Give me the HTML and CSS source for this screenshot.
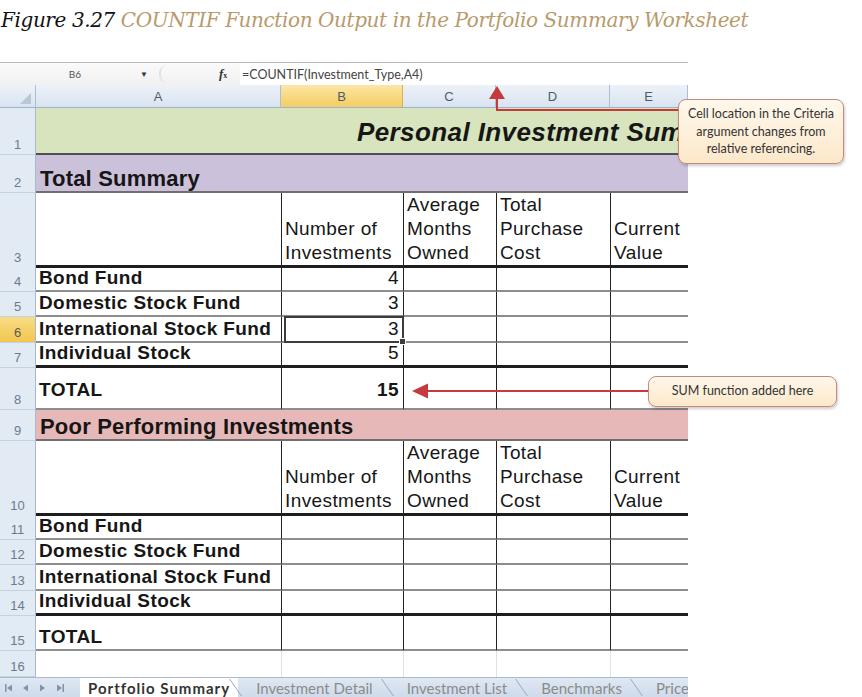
FILE: index.html
```html
<!DOCTYPE html>
<html lang="en">
<head>
  <meta charset="UTF-8">
  <meta name="viewport" content="width=device-width, initial-scale=1.0">
  <title>Figure 3.27 COUNTIF Function Output</title>
  <link rel="stylesheet" href="styles.css">
</head>
<body>
  <div class="page">
    <p class="caption"><span class="fig">Figure 3.27</span> COUNTIF Function Output in the Portfolio Summary Worksheet</p>

    <div class="excel">
      <div class="formula-bar">
        <div class="name-box">B6</div>
        <span class="drop">&#9660;</span>
        <span class="grip"></span>
        <span class="fx"><i>f</i><small>x</small></span>
        <div class="formula">=COUNTIF(Investment_Type,A4)</div>
      </div>

      <div class="sheet">
        <div class="row col-heads">
          <div class="corner"></div>
          <div class="ch">A</div>
          <div class="ch on">B</div>
          <div class="ch">C</div>
          <div class="ch">D</div>
          <div class="ch">E</div>
        </div>

        <div class="row title-row">
          <div class="rh">1</div>
          <div class="c wide title">Personal Investment Summary</div>
        </div>

        <div class="row section-row summary">
          <div class="rh">2</div>
          <div class="c wide section">Total Summary</div>
        </div>

        <div class="row head-row ruled">
          <div class="rh">3</div>
          <div class="c"></div>
          <div class="c"><span>Number of<br>Investments</span></div>
          <div class="c"><span>Average<br>Months<br>Owned</span></div>
          <div class="c"><span>Total<br>Purchase<br>Cost</span></div>
          <div class="c"><span>Current<br>Value</span></div>
        </div>

        <div class="row data-row ruled">
          <div class="rh">4</div>
          <div class="c label">Bond Fund</div>
          <div class="c num">4</div>
          <div class="c"></div><div class="c"></div><div class="c"></div>
        </div>
        <div class="row data-row ruled">
          <div class="rh">5</div>
          <div class="c label">Domestic Stock Fund</div>
          <div class="c num">3</div>
          <div class="c"></div><div class="c"></div><div class="c"></div>
        </div>
        <div class="row data-row ruled">
          <div class="rh on">6</div>
          <div class="c label">International Stock Fund</div>
          <div class="c num sel">3</div>
          <div class="c"></div><div class="c"></div><div class="c"></div>
        </div>
        <div class="row data-row last ruled">
          <div class="rh">7</div>
          <div class="c label">Individual Stock</div>
          <div class="c num">5</div>
          <div class="c"></div><div class="c"></div><div class="c"></div>
        </div>

        <div class="row total-row first-total ruled">
          <div class="rh">8</div>
          <div class="c label">TOTAL</div>
          <div class="c num bold">15</div>
          <div class="c"></div><div class="c"></div><div class="c"></div>
        </div>

        <div class="row section-row poor">
          <div class="rh">9</div>
          <div class="c wide section">Poor Performing Investments</div>
        </div>

        <div class="row head-row ruled">
          <div class="rh">10</div>
          <div class="c"></div>
          <div class="c"><span>Number of<br>Investments</span></div>
          <div class="c"><span>Average<br>Months<br>Owned</span></div>
          <div class="c"><span>Total<br>Purchase<br>Cost</span></div>
          <div class="c"><span>Current<br>Value</span></div>
        </div>

        <div class="row data-row ruled">
          <div class="rh">11</div>
          <div class="c label">Bond Fund</div>
          <div class="c"></div><div class="c"></div><div class="c"></div><div class="c"></div>
        </div>
        <div class="row data-row ruled">
          <div class="rh">12</div>
          <div class="c label">Domestic Stock Fund</div>
          <div class="c"></div><div class="c"></div><div class="c"></div><div class="c"></div>
        </div>
        <div class="row data-row ruled">
          <div class="rh">13</div>
          <div class="c label">International Stock Fund</div>
          <div class="c"></div><div class="c"></div><div class="c"></div><div class="c"></div>
        </div>
        <div class="row data-row last ruled">
          <div class="rh">14</div>
          <div class="c label">Individual Stock</div>
          <div class="c"></div><div class="c"></div><div class="c"></div><div class="c"></div>
        </div>

        <div class="row total-row ruled">
          <div class="rh">15</div>
          <div class="c label">TOTAL</div>
          <div class="c"></div><div class="c"></div><div class="c"></div><div class="c"></div>
        </div>

        <div class="row blank-row">
          <div class="rh">16</div>
          <div class="c"></div><div class="c"></div><div class="c"></div><div class="c"></div><div class="c"></div>
        </div>
      </div>

      <div class="tabs">
        <div class="tab-nav">
          <svg width="72" height="12" viewBox="0 0 72 12">
            <rect x="4" y="2" width="1.5" height="8" fill="#8093ab"/>
            <path d="M6 6 L11 2.5 V9.5 Z" fill="#8093ab"/>
            <path d="M22 6 L27 2.5 V9.5 Z" fill="#8093ab"/>
            <path d="M44 6 L39 2.5 V9.5 Z" fill="#8093ab"/>
            <path d="M61 6 L56 2.5 V9.5 Z" fill="#8093ab"/>
            <rect x="61.5" y="2" width="1.5" height="8" fill="#8093ab"/>
          </svg>
        </div>
        <div class="tab active">Portfolio Summary</div>
        <div class="tab">Investment Detail</div>
        <div class="tab">Investment List</div>
        <div class="tab">Benchmarks</div>
        <div class="tab">Price Data</div>
      </div>
    </div>

    <svg class="arrows" width="862" height="697" viewBox="0 0 862 697">
      <path d="M679 110 H497 V97" fill="none" stroke="#c53a3c" stroke-width="2"/>
      <path d="M497 86 L505 99 L489 99 Z" fill="#c53a3c"/>
      <path d="M649 391 H425" fill="none" stroke="#c53a3c" stroke-width="2"/>
      <path d="M412 391 L428 383.5 L428 398.5 Z" fill="#c53a3c"/>
    </svg>

    <div class="callout callout-criteria">Cell location in the Criteria<br>argument changes from<br>relative referencing.</div>
    <div class="callout callout-sum">SUM function added here</div>
  </div>
</body>
</html>
```

FILE: styles.css
```css
* {
  margin: 0;
  padding: 0;
  box-sizing: border-box;
}

body {
  font-family: 'Liberation Sans', Arial, sans-serif;
  background-color: #fff;
}

.page {
  position: relative;
  width: 862px;
  height: 697px;
  overflow: hidden;
}

/* figure caption */
.caption {
  font-family: 'DejaVu Serif', serif;
  font-style: italic;
  font-size: 20px;
  letter-spacing: -0.4px;
  line-height: 28px;
  padding: 6px 0 0 1px;
  color: #b99a6b;
  white-space: nowrap;
}

.caption .fig {
  color: #111;
}

.excel {
  width: 688px;
  margin-top: 28px;
}

/* formula bar */
.formula-bar {
  display: flex;
  align-items: center;
  height: 23px;
  border-top: 1px solid #b9b9b9;
  background: linear-gradient(#fafafa, #f1f1f1);
  font-family: Lato, sans-serif;
  font-size: 12.5px;
  color: #444;
}

.name-box {
  width: 140px;
  padding-left: 10px;
  text-align: center;
  font-size: 10px;
  color: #555;
}

.drop {
  font-size: 8px;
  color: #333;
  width: 19px;
}

.grip {
  width: 8px;
  height: 18px;
  border-left: 2px solid #dde3ea;
  border-radius: 8px 0 0 8px;
  margin-right: 52px;
}

.fx {
  font-family: 'Liberation Serif', serif;
  font-weight: bold;
  font-size: 13px;
  color: #333;
  width: 21px;
}

.fx small {
  font-size: 8px;
}

.formula {
  flex: 1;
  align-self: stretch;
  display: flex;
  align-items: center;
  background-color: #fff;
  padding-left: 2px;
}

/* grid */
.row {
  display: grid;
  grid-template-columns: 36px 245px 122px 93px 114px 78px;
}

.col-heads { height: 23px; }
.title-row { height: 47px; }
.summary { height: 38px; }
.poor { height: 31px; }
.head-row { height: 73px; }
.data-row { height: 25.5px; }
.total-row { height: 35px; }
.total-row.first-total { height: 42px; }
.blank-row { height: 26px; }

.corner,
.ch {
  background: linear-gradient(#edf2f9, #d9e3f0);
  border-right: 1px solid #abc0d6;
  border-bottom: 1px solid #9fb4cc;
}

.corner {
  position: relative;
}

.corner::after {
  content: '';
  position: absolute;
  right: 4px;
  bottom: 3px;
  border-left: 11px solid transparent;
  border-bottom: 11px solid #b9c6d5;
}

.ch {
  display: flex;
  align-items: center;
  justify-content: center;
  font-size: 13px;
  color: #4f5b69;
}

.ch.on {
  background: linear-gradient(#fbe6a4, #f5cd62);
  border-right-color: #d9b24e;
}

.rh {
  display: flex;
  align-items: flex-end;
  justify-content: center;
  padding-bottom: 2px;
  background-color: #e2eaf4;
  border-right: 1px solid #a5b9cf;
  border-bottom: 1px solid #c3d1e1;
  font-size: 13px;
  color: #6c7b8c;
}

.rh.on {
  background: linear-gradient(#f9dc85, #f3c650);
  color: #5a5a5a;
}

.c {
  display: flex;
  align-items: flex-end;
  padding: 0 2px 1px 3px;
  font-size: 19px;
  letter-spacing: 0.4px;
  line-height: 22px;
  color: #161616;
  white-space: nowrap;
  overflow: hidden;
}

.wide {
  grid-column: 2 / 7;
}

.title {
  padding: 0 0 5px 321px;
  background-color: #d8e4bd;
  border-bottom: 2px solid #505050;
  font-size: 26px;
  font-weight: bold;
  font-style: italic;
  line-height: 32px;
}

.section {
  padding-left: 4px;
  padding-bottom: 0;
  font-size: 22px;
  font-weight: bold;
  letter-spacing: 0.2px;
  line-height: 24px;
  border-bottom: 2px solid #6f6f6f;
}

.summary .section {
  background-color: #ccc1da;
}

.poor .section {
  background-color: #e6b9b8;
}

.ruled .c + .c {
  border-left: 1px solid #222;
}

.head-row .c {
  line-height: 24px;
  padding-bottom: 0;
  overflow: visible;
  border-bottom: 3px solid #1e1e1e;
}

.data-row .c {
  border-bottom: 2px solid #8d8d8d;
}

.data-row.last .c {
  border-bottom: 3px solid #1e1e1e;
}

.total-row .c {
  border-bottom: 2px solid #8d8d8d;
  padding-bottom: 1px;
}

.total-row.first-total .c {
  padding-bottom: 7px;
}

.label {
  font-weight: bold;
}

.num {
  justify-content: flex-end;
  padding-right: 4px;
}

.bold {
  font-weight: bold;
}

.sel {
  position: relative;
  overflow: visible;
}

.sel::after {
  content: '';
  position: absolute;
  left: 2px;
  right: -1px;
  top: -1px;
  bottom: -2px;
  border: 2px solid #3c3c3c;
}

.sel::before {
  content: '';
  position: absolute;
  right: -3px;
  bottom: -4px;
  width: 5px;
  height: 5px;
  background-color: #3c3c3c;
  border: 1px solid #fff;
  z-index: 1;
}

.blank-row .c + .c {
  border-left: 1px solid #e2e2e2;
}

/* sheet tabs */
.tabs {
  display: flex;
  align-items: stretch;
  height: 20px;
  background: linear-gradient(#dfe8f3, #cfdbea);
  border-top: 1px solid #a9bace;
  font-family: Lato, sans-serif;
  font-size: 15px;
  color: #8b8b8b;
  white-space: nowrap;
  overflow: hidden;
}

.tab-nav {
  display: flex;
  align-items: center;
  flex-shrink: 0;
  width: 80px;
  padding-left: 1px;
}

.tab {
  position: relative;
  display: flex;
  align-items: center;
  flex-shrink: 0;
  padding: 0 17px;
}

.tab::after {
  content: '';
  position: absolute;
  right: 2px;
  top: 1px;
  bottom: 1px;
  border-right: 1px solid #98a8bb;
  transform: skewX(35deg);
}

.tab.active {
  padding: 0 8px;
  margin-right: 1px;
  background-color: #fff;
  color: #333;
  font-weight: bold;
  letter-spacing: 1px;
}

/* callouts */
.arrows {
  position: absolute;
  left: 0;
  top: 0;
  pointer-events: none;
}

.callout {
  position: absolute;
  border: 1.5px solid #c9887a;
  border-radius: 8px;
  background: linear-gradient(#fff8ec, #fce8ca);
  box-shadow: 1px 2px 3px rgba(0, 0, 0, 0.2);
  font-family: Lato, sans-serif;
  font-size: 12.5px;
  line-height: 17.5px;
  color: #333;
  text-align: center;
}

.callout-criteria {
  left: 678px;
  top: 99px;
  width: 166px;
  height: 65px;
  padding-top: 5px;
}

.callout-sum {
  left: 648px;
  top: 376px;
  width: 189px;
  height: 31px;
  line-height: 28px;
}
```
